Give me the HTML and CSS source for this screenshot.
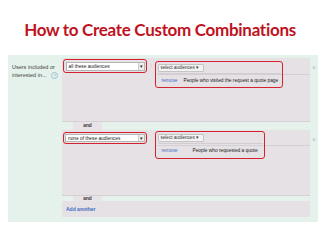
FILE: index.html
```html
<!DOCTYPE html>
<html lang="en">
<head>
    <meta charset="UTF-8">
    <title>How to Create Custom Combinations</title>
    <link rel="stylesheet" href="styles.css">
</head>
<body>
    <h1 class="title">How to Create Custom Combinations</h1>

    <div class="panel">
        <div class="side">Users included or interested in... <span class="help">?</span></div>

        <div class="main">
            <div class="group">
                <div class="block">
                    <div class="mark sel-mark">
                        <div class="select"><span>all these audiences</span><span class="arrow">▾</span></div>
                    </div>
                    <span class="colon">:</span>
                    <div class="mark list-mark wide">
                        <div class="picker"><span class="btn">select audiences ▾</span></div>
                        <div class="item"><a class="remove">remove</a><span class="name">People who visited the request a quote page</span></div>
                    </div>
                </div>
                <span class="close">×</span>
            </div>

            <div class="and tall"><span>and</span></div>

            <div class="group">
                <div class="block second">
                    <div class="mark sel-mark">
                        <div class="select"><span>none of these audiences</span><span class="arrow">▾</span></div>
                    </div>
                    <span class="colon"></span>
                    <div class="mark list-mark narrow">
                        <div class="picker"><span class="btn">select audiences ▾</span></div>
                        <div class="item"><a class="remove">remove</a><span class="name far">People who requested a quote</span></div>
                    </div>
                </div>
                <span class="close">×</span>
            </div>

            <div class="and"><span>and</span></div>

            <div class="add"><a>Add another</a></div>
        </div>
    </div>
</body>
</html>
```

FILE: styles.css
```css
body {
    margin: 0;
    background: #fff;
    font-family: "Liberation Sans", Arial, sans-serif;
    color: #333;
}

.title {
    margin: 0;
    padding-top: 20px;
    text-align: center;
    font: bold 17px/20px Lato, "Open Sans", sans-serif;
    letter-spacing: -0.3px;
    color: #c0121e;
}

.panel {
    margin: 15px 2px 0 8px;
    display: grid;
    grid-template-columns: 54px 1fr;
    background: #e5f2eb;
    padding: 3px 0 5px 0;
}

.side {
    padding: 5px 0 0 4px;
    font-size: 5.5px;
    line-height: 8px;
    color: #444;
}

.help {
    display: inline-block;
    width: 5px;
    height: 5px;
    line-height: 5px;
    border: 1px solid #9bc3d9;
    border-radius: 50%;
    color: #7aa9c7;
    font-size: 4px;
    text-align: center;
    margin-left: 3px;
}

.main {
    display: flex;
    flex-direction: column;
}

.group {
    display: flex;
}

/* grey box with a divider line running under the audience picker */
.block {
    flex: 1;
    height: 64px;
    box-sizing: border-box;
    padding: 1px 0 0 1px;
    background: linear-gradient(#d4cfd3, #d4cfd3) no-repeat 95px 16px / calc(100% - 95px) 1px, #e6e1e5;
    display: flex;
    align-items: flex-start;
    border-bottom: 1px solid #d6d0d5;
}

.block.second {
    height: 66px;
    background-position: 95px 15px, 0 0;
}

.close {
    width: 8px;
    padding-top: 6px;
    text-align: center;
    font-size: 7px;
    line-height: 7px;
    color: #b8b8b8;
}

.mark {
    box-sizing: border-box;
    border: 1.5px solid #d3212d;
    border-radius: 3px;
}

.sel-mark {
    width: 84px;
    height: 14px;
    padding: 1.5px;
}

.second .sel-mark {
    margin-top: 1px;
    height: 12px;
    padding: 1px;
}

.select {
    height: 100%;
    box-sizing: border-box;
    background: #fff;
    border: 1px solid #b5b5b5;
    display: flex;
    align-items: center;
    justify-content: space-between;
    padding-left: 2px;
    font-size: 4.8px;
    color: #222;
}

.arrow {
    width: 5px;
    height: 100%;
    border-left: 1px solid #ccc;
    background: #eee;
    font-size: 5px;
    line-height: 7px;
    text-align: center;
}

.colon {
    width: 8px;
    padding-top: 3px;
    text-align: center;
    font-size: 5px;
    color: #777;
}

.list-mark {
    margin-top: 2px;
    height: 27px;
    padding: 1.5px;
}

.wide {
    width: 128px;
}

.narrow {
    width: 110px;
    margin-top: 0;
    height: 28px;
}

.picker {
    display: flex;
    padding-bottom: 1px;
    border-bottom: 1px solid #d2cdd1;
}

.btn {
    width: 46px;
    height: 8px;
    line-height: 6px;
    box-sizing: border-box;
    padding-left: 2px;
    background: #f3f3f3;
    border: 1px solid #c4c4c4;
    border-radius: 1px;
    font-size: 4.6px;
    color: #333;
}

.item {
    display: flex;
    padding: 4px 0 0 4px;
    font-size: 4.8px;
    line-height: 6px;
    color: #222;
}

.remove {
    color: #3b6cc4;
    width: 22px;
}

.name.far {
    margin-left: 9px;
}

.and {
    height: 5px;
    margin-right: 8px;
    padding-left: 11px;
}

.and.tall {
    height: 8px;
}

.and span {
    display: inline-block;
    vertical-align: top;
    width: 29px;
    height: 100%;
    background: #e8e3e7;
    text-align: center;
    font-size: 4.8px;
    font-weight: bold;
    line-height: 5px;
    color: #333;
}

.and.tall span {
    line-height: 8px;
}

.add {
    margin-right: 8px;
    height: 16px;
    background: #e6e1e5;
    padding: 5px 0 0 4px;
    box-sizing: border-box;
    font-size: 5px;
    font-weight: bold;
    color: #3b6cc4;
}
```
